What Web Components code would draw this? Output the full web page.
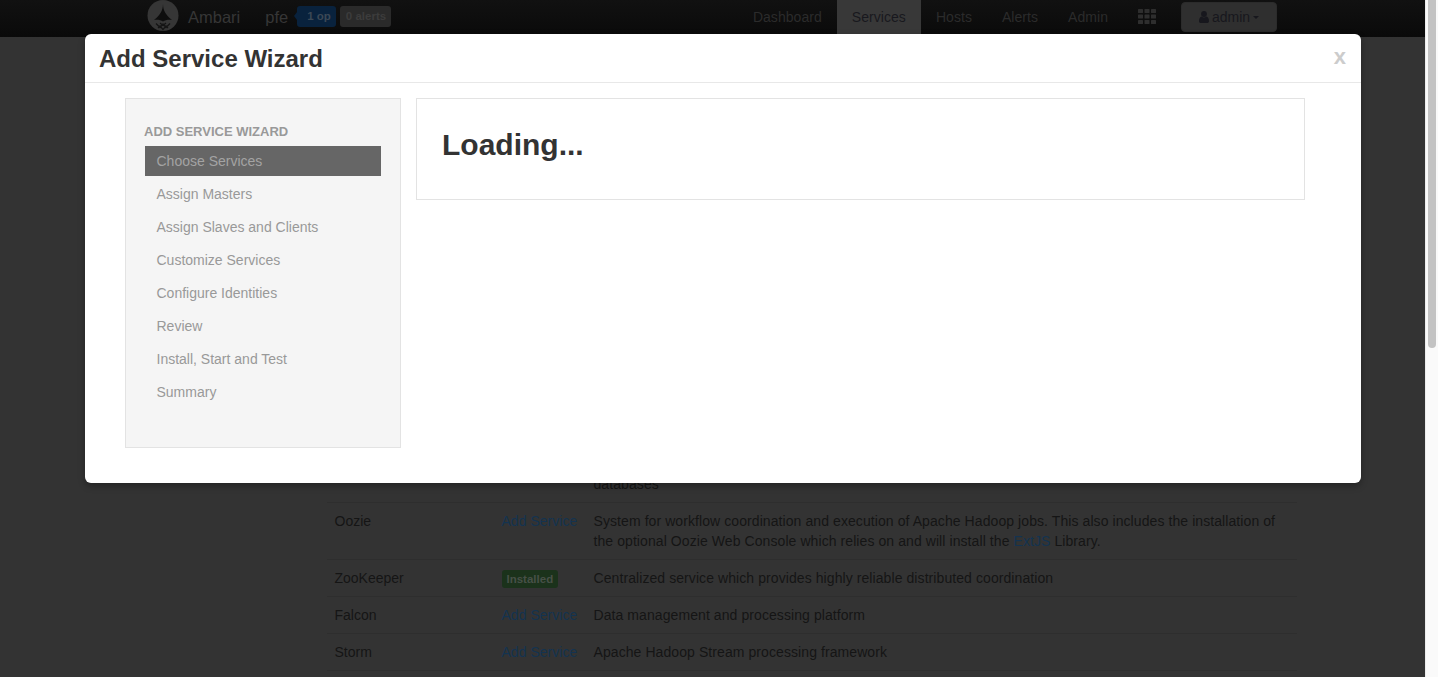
<!DOCTYPE html>
<html>
<head>
<meta charset="utf-8">
<title>Add Service Wizard</title>
<style>
    html, body { margin: 0; height: 100%; overflow: hidden; background: #333; }
    body { font: 14px/20px "Liberation Sans", Arial, sans-serif; }
</style>
</head>
<body>
<ambari-app>
    <ambari-navbar></ambari-navbar>
    <service-table>
        <service-row name="Sqoop">Tool for transferring bulk data between Apache Hadoop and structured data stores such as relational<br>databases</service-row>
        <service-row name="Oozie">System for workflow coordination and execution of Apache Hadoop jobs. This also includes the installation of<br>the optional Oozie Web Console which relies on and will install the <a>ExtJS</a> Library.</service-row>
        <service-row name="ZooKeeper" installed>Centralized service which provides highly reliable distributed coordination</service-row>
        <service-row name="Falcon">Data management and processing platform</service-row>
        <service-row name="Storm">Apache Hadoop Stream processing framework</service-row>
    </service-table>
    <wizard-modal heading="Add Service Wizard">
        <wizard-steps heading="Add Service Wizard" current="0"
            steps="Choose Services|Assign Masters|Assign Slaves and Clients|Customize Services|Configure Identities|Review|Install, Start and Test|Summary"></wizard-steps>
        <wizard-content>Loading...</wizard-content>
    </wizard-modal>
</ambari-app>
<script>
class AmbariApp extends HTMLElement {
    constructor() {
        super();
        this.attachShadow({ mode: 'open' }).innerHTML = `
            <style>
                :host { display: flex; height: 677px; overflow: hidden; }
                .page { position: relative; flex: 1; min-width: 0; display: flex; flex-direction: column; }
                .overlay { position: absolute; inset: 0; padding: 34px 64px 0 85px; }
                .scrollbar { background: #fafafa; border-left: 1px solid #ececec; padding: 0 2px; box-sizing: border-box; width: 13px; }
                .thumb { height: 348px; background: #c3c3c3; border-radius: 0 0 4px 4px; }
            </style>
            <div class="page">
                <slot name="nav"></slot>
                <slot></slot>
                <div class="overlay"><slot name="modal"></slot></div>
            </div>
            <div class="scrollbar"><div class="thumb"></div></div>
        `
    }
    connectedCallback() {
        this.querySelector('ambari-navbar').slot = 'nav'
        this.querySelector('wizard-modal').slot = 'modal'
    }
}

class AmbariNavbar extends HTMLElement {
    constructor() {
        super();
        this.attachShadow({ mode: 'open' }).innerHTML = `
            <style>
                :host { display: flex; flex: none; height: 37px; padding: 0 148px 0 147px; box-sizing: border-box;
                    background: linear-gradient(#111, #0a0a0a); color: #2c2c2c; }
                .brand { display: flex; align-items: flex-start; }
                .brand svg { display: block; }
                .name { font-size: 16.5px; line-height: 34px; color: #363636; margin-left: 9px; }
                .cluster { font-size: 16.5px; line-height: 34px; color: #363636; margin-left: 25px; }
                .op, .alerts { height: 21px; margin-top: 6px; border-radius: 3px; font: bold 11.5px/21px "Liberation Sans", Arial, sans-serif; }
                .op { position: relative; background: #09223d; color: #3b4855; margin-left: 9px; padding: 0 5px 0 10px; }
                .op::before { content: ""; position: absolute; left: -3px; top: 6px; border: 4px solid transparent; border-left: 0; border-right: 3px solid #09223d; }
                .alerts { background: #2a2a2a; color: #3c3c3c; margin-left: 4px; padding: 0 5px 0 6px; }
                nav { display: flex; margin-left: auto; letter-spacing: .05px; }
                .item { padding: 0 15px; line-height: 34px; height: 37px; color: #2b2b2b; }
                .item.active { background: #383838; color: #18181e; }
                .apps { display: flex; align-items: flex-start; padding: 9px 15px 0; }
                button { box-sizing: border-box; display: flex; align-items: center; justify-content: center; width: 96px; height: 30px; margin: 2px 0 0 10px; padding: 0;
                    font: 14px/20px "Liberation Sans", Arial, sans-serif; color: #17171d; background: #2f2f2f; border: 1px solid #2b2b2b; border-radius: 4px; }
                button svg { margin-right: 3px; }
                .caret { margin-left: 3px; border: 3.5px solid transparent; border-bottom: 0; border-top-color: #17171d; }
            </style>
            <div class="brand">
                <svg width="32" height="32" viewBox="0 0 32 32">
                    <circle cx="16" cy="15.5" r="15.5" fill="#363636"/>
                    <path d="M16 4C16.2 10 18 14.5 25 20C21.5 19.4 18.5 20 16 21.5C13.5 20 10.5 19.4 7 20C14 14.5 15.8 10 16 4Z" fill="#0e0e0e"/>
                    <path d="M9 23.5L13 27.5L16 24L19 27.5L23 23.5M11 28L13 26L16 29.5L19 26L21 28M13 23L16 25.5L19 23" fill="none" stroke="#141414" stroke-width="1.2"/>
                </svg>
                <span class="name">Ambari</span>
                <span class="cluster">pfe</span>
                <span class="op">1 op</span>
                <span class="alerts">0 alerts</span>
            </div>
            <nav>
                <span class="item">Dashboard</span>
                <span class="item active">Services</span>
                <span class="item">Hosts</span>
                <span class="item">Alerts</span>
                <span class="item">Admin</span>
                <span class="apps">
                    <svg width="18" height="15" viewBox="0 0 18 15" fill="#2e2e2e">
                        <rect width="5" height="4" rx=".6"/><rect x="6.5" width="5" height="4" rx=".6"/><rect x="13" width="5" height="4" rx=".6"/>
                        <rect y="5.5" width="5" height="4" rx=".6"/><rect x="6.5" y="5.5" width="5" height="4" rx=".6"/><rect x="13" y="5.5" width="5" height="4" rx=".6"/>
                        <rect y="11" width="5" height="4" rx=".6"/><rect x="6.5" y="11" width="5" height="4" rx=".6"/><rect x="13" y="11" width="5" height="4" rx=".6"/>
                    </svg>
                </span>
                <button>
                    <svg width="10" height="12" viewBox="0 0 10 12" fill="#17171d"><circle cx="5" cy="3" r="2.9"/><path d="M0 10.2C0 7.6 1 5.8 2.6 5.4C3.3 6 4.1 6.4 5 6.4C5.9 6.4 6.7 6 7.4 5.4C9 5.8 10 7.6 10 10.2C10 11.3 9.2 12 8.2 12H1.8C.8 12 0 11.3 0 10.2Z"/></svg>
                    admin<span class="caret"></span>
                </button>
            </nav>
        `
    }
}

class ServiceTable extends HTMLElement {
    constructor() {
        super();
        this.attachShadow({ mode: 'open' }).innerHTML = `
            <style>
                :host { display: block; padding: 408px 128px 0 327px; }
                .end { border-top: 1px solid #2e2e2e; height: 6px; }
            </style>
            <slot></slot>
            <div class="end"></div>
        `
    }
}

class ServiceRow extends HTMLElement {
    constructor() {
        super();
        this.attachShadow({ mode: 'open' }).innerHTML = `
            <style>
                :host { display: grid; grid-template-columns: 167px 92px 1fr; padding: 8px 6px 8px 7.5px; border-top: 1px solid #2e2e2e; color: #151515; }
                .add { color: #143350; letter-spacing: .03px; }
                .desc { letter-spacing: .08px; }
                .badge { display: inline-block; vertical-align: top; height: 18px; margin-top: 2px; padding: 0 5px; border-radius: 3px; background: #1b321b;
                    font: bold 11.5px/18px "Liberation Sans", Arial, sans-serif; color: #475047; }
                ::slotted(a) { color: #143350; }
            </style>
            <span class="name"></span>
            <span class="action"></span>
            <span class="desc"><slot></slot></span>
        `
    }
    connectedCallback() {
        this.shadowRoot.querySelector('.name').textContent = this.getAttribute('name')
        this.shadowRoot.querySelector('.action').innerHTML = this.hasAttribute('installed')
            ? '<span class="badge">Installed</span>'
            : '<span class="add">Add Service</span>'
    }
}

class WizardModal extends HTMLElement {
    constructor() {
        super();
        this.attachShadow({ mode: 'open' }).innerHTML = `
            <style>
                :host { display: block; background: #fff; border-radius: 6px; box-shadow: 0 3px 7px rgba(0,0,0,.3); }
                header { display: flex; justify-content: space-between; align-items: center; height: 49px; padding: 2px 15px 0 14px; box-sizing: border-box; border-bottom: 1px solid #e8e8e8; }
                h3 { margin: 0; font: bold 24px/30px "Liberation Sans", Arial, sans-serif; color: #333; }
                .close { font: bold 22px/20px "Liberation Sans", Arial, sans-serif; color: #ccc; margin-top: -4px; }
                .body { display: grid; grid-template-columns: 276px 1fr; gap: 15px; align-items: start; padding: 15px 56px 35px 40px; }
            </style>
            <header><h3></h3><span class="close">x</span></header>
            <div class="body"><slot></slot></div>
        `
    }
    connectedCallback() {
        this.shadowRoot.querySelector('h3').textContent = this.getAttribute('heading')
    }
}

class WizardSteps extends HTMLElement {
    constructor() {
        super();
        this.attachShadow({ mode: 'open' }).innerHTML = `
            <style>
                :host { display: block; box-sizing: border-box; padding: 25px 19px 37px 18px; background: #f5f5f5; border: 1px solid #e3e3e3; }
                .title { font: bold 13px/16px "Liberation Sans", Arial, sans-serif; text-transform: uppercase; color: #999; margin-bottom: 6px; }
                .step { height: 30px; line-height: 30px; margin: 0 0 3px 1px; padding-left: 11.5px; color: #999; }
                .step.active { background: #666; color: #a3a3a3; }
            </style>
            <div class="title"></div>
            <div class="steps"></div>
        `
    }
    connectedCallback() {
        const current = Number(this.getAttribute('current'))
        this.shadowRoot.querySelector('.title').textContent = this.getAttribute('heading')
        this.shadowRoot.querySelector('.steps').innerHTML = this.getAttribute('steps').split('|')
            .map((step, i) => `<div class="step ${i === current ? 'active' : ''}">${step}</div>`)
            .join('')
    }
}

class WizardContent extends HTMLElement {
    constructor() {
        super();
        this.attachShadow({ mode: 'open' }).innerHTML = `
            <style>
                :host { display: block; padding: 26px 25px 34px; border: 1px solid #e3e3e3; font: bold 30px/40px "Liberation Sans", Arial, sans-serif; color: #333; }
            </style>
            <slot></slot>
        `
    }
}

window.customElements.define('ambari-app', AmbariApp)
window.customElements.define('ambari-navbar', AmbariNavbar)
window.customElements.define('service-table', ServiceTable)
window.customElements.define('service-row', ServiceRow)
window.customElements.define('wizard-modal', WizardModal)
window.customElements.define('wizard-steps', WizardSteps)
window.customElements.define('wizard-content', WizardContent)
</script>
</body>
</html>
